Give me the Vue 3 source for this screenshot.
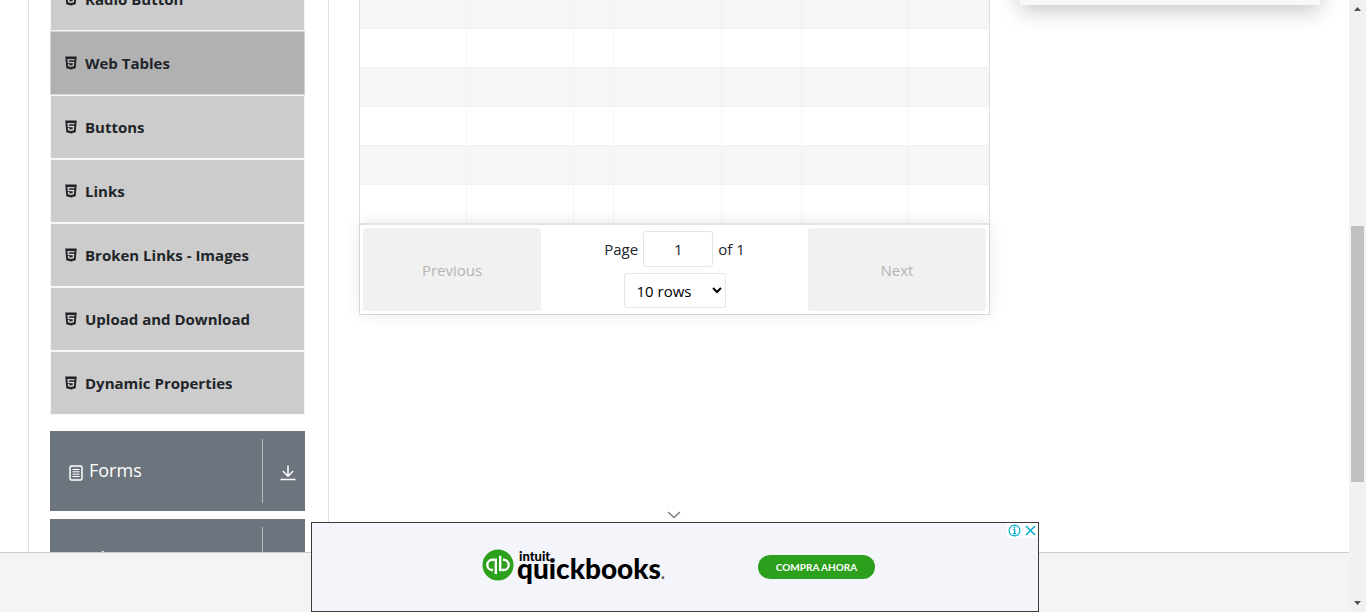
<script setup>
import { ref } from 'vue'

const items = [
  'Radio Button',
  'Web Tables',
  'Buttons',
  'Links',
  'Broken Links - Images',
  'Upload and Download',
  'Dynamic Properties'
]
const active = ref('Web Tables')
const groups = ['Forms', 'Alerts, Frame & Windows']
const columns = ['c107', 'c107', 'c40', 'c108', 'c80', 'c107', 'rest']
const page = ref(1)
const pageSize = ref(10)
</script>

<template>
  <div class="window">
    <div class="view">
      <main class="content">
        <nav class="sidebar">
          <ul class="menu">
            <li v-for="item in items" :key="item">
              <button type="button" class="item" :class="{ active: item === active }" @click="active = item">
                <svg class="item-icon" viewBox="0 0 1024 1024" aria-hidden="true">
                  <path fill="currentColor" d="M145.2 96l66 746.6L512 928l299.6-85.4L878.9 96H145.2zm595 177.1l-4.8 47.2-1.7 19.5H382.3l8.2 94.2h335.1l-3.3 24.3-21.2 242.2-1.7 16.2-187 51.6v.3h-1.2l-.3.1v-.1h-.1l-188.6-52L310.8 572h91.1l6.5 73.2 102.4 27.7h.4l102-27.6 11.4-118.6H510.9v-.1H306l-22.8-253.5-1.7-24.3h460.3l-1.6 24.3z" />
                </svg>
                <span>{{ item }}</span>
              </button>
            </li>
          </ul>
          <button v-for="group in groups" :key="group" type="button" class="group">
            <span class="group-label">
              <svg class="group-icon" viewBox="0 0 14 16" aria-hidden="true">
                <rect x="1" y="1" width="12" height="14" rx="1.5" fill="none" stroke="currentColor" stroke-width="1.5" />
                <path d="M3.5 4.5h7M3.5 6.8h7M3.5 9.2h7M3.5 11.5h7" stroke="currentColor" stroke-width="1" />
              </svg>
              <span>{{ group }}</span>
            </span>
            <span class="group-arrow">
              <svg viewBox="0 0 16 16" width="16" height="16" aria-hidden="true">
                <path d="M8 0.5V11M2.8 6L8 11.2L13.2 6M0.5 14.6h15" fill="none" stroke="currentColor" stroke-width="1.5" />
              </svg>
            </span>
          </button>
        </nav>

        <section class="center">
          <div class="grid-box">
            <table class="rows" aria-label="Web tables">
              <colgroup>
                <col v-for="(c, i) in columns" :key="i" :class="c" />
              </colgroup>
              <tbody>
                <tr v-for="r in 6" :key="r">
                  <td v-for="(c, i) in columns" :key="i"></td>
                </tr>
              </tbody>
            </table>
            <div class="pager">
              <button type="button" class="step" disabled>Previous</button>
              <div class="pager-center">
                <div class="page-jump">
                  <label for="page">Page</label>
                  <input id="page" v-model="page" type="text" />
                  <span>of 1</span>
                </div>
                <select v-model="pageSize" aria-label="rows per page">
                  <option :value="10">10 rows</option>
                  <option :value="20">20 rows</option>
                </select>
              </div>
              <button type="button" class="step" disabled>Next</button>
            </div>
          </div>
        </section>

        <aside class="side">
          <div class="side-card"></div>
        </aside>
      </main>
      <footer class="footer"></footer>

      <div class="overlay">
        <button type="button" class="collapse" aria-label="Collapse">
          <svg viewBox="0 0 14 8" width="14" height="8"><path d="M1 1L7 6.5L13 1" fill="none" stroke="#777" stroke-width="1.3" /></svg>
        </button>
        <div class="banner">
          <div class="brand">
            <svg class="mark" viewBox="0 0 32 32" width="32" height="32" aria-hidden="true">
              <circle cx="16" cy="16" r="15.5" fill="#2ca01c" />
              <g fill="none" stroke="#fff" stroke-width="2.4">
                <path d="M12.6 10.8H10.4a5.1 5.1 0 0 0 0 10.2h0.6" />
                <path d="M13.8 9.6V25" />
                <path d="M19.4 21h2.2a5.1 5.1 0 0 0 0-10.2h-0.6" />
                <path d="M18.2 22.2V6.8" />
              </g>
            </svg>
            <div class="brand-text">
              <span class="intuit">intuit</span>
              <span class="qb">quickbooks<span class="dot">.</span></span>
            </div>
          </div>
          <button type="button" class="cta">COMPRA AHORA</button>
          <div class="choices">
            <button type="button" aria-label="Ad information">
              <svg viewBox="0 0 15 15" width="15" height="15"><circle cx="7.5" cy="7.5" r="5.4" fill="none" stroke="#00aecd" stroke-width="1.2" /><path d="M6.2 6.4h1.5v4.2M6 10.7h3.2" fill="none" stroke="#00aecd" stroke-width="1.3" /><circle cx="7.5" cy="4.4" r="0.9" fill="#00aecd" /></svg>
            </button>
            <button type="button" aria-label="Close ad">
              <svg viewBox="0 0 15 15" width="15" height="15"><path d="M3 3l9 9M12 3l-9 9" stroke="#00aecd" stroke-width="1.5" /></svg>
            </button>
          </div>
        </div>
      </div>
    </div>

    <div class="scrollbar" aria-hidden="true">
      <svg viewBox="0 0 17 17" width="17" height="17"><path d="M5 11L8.5 7L12 11z" fill="#505050" /></svg>
      <div class="before"></div>
      <div class="thumb"></div>
      <div class="after"></div>
      <svg viewBox="0 0 17 17" width="17" height="17"><path d="M5 6L8.5 10L12 6z" fill="#505050" /></svg>
    </div>
  </div>
</template>

<style>
body {
  margin: 0;
  overflow: hidden;
}
</style>

<style scoped>
* {
  box-sizing: border-box;
}
.window {
  display: flex;
  height: 100vh;
  background: #fff;
  color: #212529;
  font-family: "Open Sans", "Noto Sans", sans-serif;
  font-size: 15px;
  line-height: 24px;
}
button,
input,
select {
  font: inherit;
  margin: 0;
}
.view {
  position: relative;
  flex: 1;
  min-width: 0;
  display: flex;
  flex-direction: column;
}
.content {
  flex: 1;
  min-height: 0;
  overflow: hidden;
  display: flex;
  gap: 30px;
  padding: 0 29px 0 28px;
}
.sidebar {
  flex: 0 0 301px;
  min-width: 0;
  border: solid #dee2e6;
  border-width: 0 1px;
  padding: 0 23px 0 21px;
}
.menu {
  list-style: none;
  margin: -33px 0 16px;
  padding: 0;
}
.item {
  display: flex;
  align-items: center;
  gap: 6px;
  width: 100%;
  height: 64px;
  padding: 0 12px;
  border: 1px solid #f6f6f6;
  background: #ccc;
  background-clip: padding-box;
  color: #212529;
  font-weight: 700;
  text-align: left;
}
.item.active {
  background: #b1b1b1;
  border-color: #ced4da;
}
.item-icon {
  width: 16px;
  height: 16px;
}
.group {
  display: flex;
  width: 100%;
  height: 80px;
  margin: 0 0 8px;
  padding: 8px 0;
  border: 0;
  background: #6c757d;
  color: #fff;
  font-size: 18px;
  text-align: left;
}
.group-label {
  flex: 1;
  min-width: 0;
  display: flex;
  align-items: center;
  gap: 6px;
  height: 62px;
  padding-left: 19px;
  white-space: nowrap;
  overflow: hidden;
}
.group-icon {
  flex: none;
  width: 14px;
  height: 16px;
  margin-top: 5px;
}
.group-arrow {
  flex: 0 0 43px;
  display: flex;
  align-items: center;
  justify-content: center;
  height: 64px;
  padding: 4px 0 0 7px;
  border-left: 1px solid #b5babe;
}
.center {
  flex: 1;
  min-width: 0;
}
.grid-box {
  border: 1px solid #e0e0e0;
  border-top: 0;
}
.rows {
  width: 100%;
  table-layout: fixed;
  border-collapse: separate;
  border-spacing: 0;
  margin-top: -11px;
}
.c107 { width: 107px; }
.c40 { width: 40px; }
.c108 { width: 108px; }
.c80 { width: 80px; }
td {
  height: 39px;
  padding: 0;
  border-right: 1px solid #f7f7f7;
  border-bottom: 1px solid #f1f1f1;
}
tr:first-child td {
  height: 40px;
}
tr:last-child td {
  height: 38px;
  border-bottom: 0;
}
tr:nth-child(odd) td {
  background: #f6f6f6;
  border-right-color: #f1f1f1;
}
tr td:last-child {
  border-right: 0;
}
.pager {
  position: relative;
  display: flex;
  padding: 3px;
  border-top: 2px solid #e2e2e2;
  box-shadow: 0 0 15px rgba(0, 0, 0, 0.1);
}
.step {
  flex: 1;
  padding: 0;
  border: 0;
  border-radius: 3px;
  background: #f1f1f1;
  color: #b4b4b4;
}
.pager-center {
  flex: 1.5;
  display: flex;
  flex-direction: column;
  align-items: center;
  gap: 6px;
  padding: 3px 0;
}
.page-jump {
  display: flex;
  align-items: center;
  gap: 5px;
}
.page-jump input {
  width: 70px;
  height: 36px;
  padding: 0;
  border: 1px solid #e5e5e5;
  border-radius: 3px;
  text-align: center;
  color: #212529;
}
select {
  width: 102px;
  height: 35px;
  padding: 0 0 0 8px;
  border: 1px solid #e5e5e5;
  border-radius: 3px;
  background: #fff;
  color: #000;
}
.side {
  position: relative;
  z-index: 0;
  flex: 0 0 300px;
}
.side-card {
  position: relative;
  height: 5px;
  background: #f8f8f8;
}
.side-card::before {
  content: "";
  position: absolute;
  inset: -60px 0 0;
  z-index: -1;
  box-shadow: 0 6px 20px rgba(0, 0, 0, 0.22);
}
.footer {
  height: 60px;
  border-top: 1px solid #ccc;
  background: #f4f4f4;
}
.overlay {
  position: absolute;
  inset: auto 0 0 0;
  display: flex;
  flex-direction: column;
  align-items: center;
  padding-left: 1px;
}
.collapse {
  display: flex;
  margin: 0 3px 3px 0;
  padding: 0;
  border: 0;
  background: none;
}
.banner {
  position: relative;
  display: flex;
  align-items: center;
  width: 728px;
  height: 90px;
  padding-left: 170px;
  border: 1px solid #3a3a3a;
  background: #f4f5fa;
}
.brand {
  display: flex;
  gap: 3px;
  width: 276px;
  height: 32px;
  margin-bottom: 4px;
  color: #000;
}
.brand-text {
  display: flex;
  flex-direction: column;
  padding-top: 1px;
  font-family: Lato, sans-serif;
}
.intuit {
  font-size: 13px;
  line-height: 12px;
  font-weight: 900;
  padding-left: 2px;
}
.qb {
  font-size: 28px;
  line-height: 12px;
  font-weight: 900;
}
.dot {
  font-size: 16px;
  line-height: 12px;
  color: #555;
}
.cta {
  width: 117px;
  height: 24px;
  padding: 0;
  border: 0;
  border-radius: 12px;
  background: #2ca01c;
  color: #fff;
  font-family: Lato, sans-serif;
  font-size: 10px;
  font-weight: 700;
}
.choices {
  position: absolute;
  top: 0;
  right: 0;
  display: flex;
  gap: 1px;
}
.choices button {
  display: flex;
  padding: 0;
  border: 0;
  background: #fff;
}
.scrollbar {
  flex: 0 0 17px;
  display: flex;
  flex-direction: column;
  background: #f1f1f1;
}
.before { flex: 209; }
.thumb {
  flex: 256;
  margin: 0 2px;
  background: #c1c1c1;
}
.after { flex: 113; }
</style>
